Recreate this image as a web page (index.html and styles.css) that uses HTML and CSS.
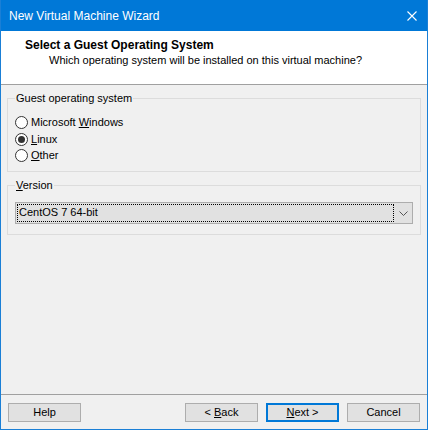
FILE: index.html
```html
<!DOCTYPE html>
<html>
<head>
<meta charset="utf-8">
<link rel="stylesheet" href="styles.css">
</head>
<body>
<div class="window">
  <div class="titlebar">
    <span class="title">New Virtual Machine Wizard</span>
    <svg class="close" width="10" height="10" viewBox="0 0 10 10"><path d="M0.5 0.5 L9.5 9.5 M9.5 0.5 L0.5 9.5" stroke="#fff" stroke-width="1.1" fill="none"/></svg>
  </div>
  <div class="header">
    <div class="h-title">Select a Guest Operating System</div>
    <div class="h-sub">Which operating system will be installed on this virtual machine?</div>
  </div>
  <div class="content">
    <fieldset class="group group-os">
      <legend>Guest operating system</legend>
      <div class="radios">
        <div class="radio"><span class="circle"></span><span>Microsoft <u>W</u>indows</span></div>
        <div class="radio"><span class="circle checked"></span><span><u>L</u>inux</span></div>
        <div class="radio"><span class="circle"></span><span><u>O</u>ther</span></div>
      </div>
    </fieldset>
    <fieldset class="group group-ver">
      <legend><u>V</u>ersion</legend>
      <div class="select">
        <div class="focus">CentOS 7 64-bit</div>
        <div class="arrow"><svg width="9" height="5" viewBox="0 0 9 5"><path d="M0.5 0.5 L4.5 4.5 L8.5 0.5" stroke="#555" stroke-width="1" fill="none"/></svg></div>
      </div>
    </fieldset>
  </div>
  <div class="footer">
    <div class="btn"><span>Help</span></div>
    <div class="spacer"></div>
    <div class="btn"><span>&lt; <u>B</u>ack</span></div>
    <div class="btn primary"><span><u>N</u>ext &gt;</span></div>
    <div class="btn"><span>Cancel</span></div>
  </div>
</div>
</body>
</html>
```

FILE: styles.css
```css
html, body {
  margin: 0;
  padding: 0;
}
body {
  width: 428px;
  height: 430px;
  font-family: "Liberation Sans", Arial, sans-serif;
  font-size: 11px;
  color: #000;
}
.window {
  width: 428px;
  height: 430px;
  box-sizing: border-box;
  border: 1px solid #1a7fd6;
  border-top: 0;
  background: #f0f0f0;
  display: flex;
  flex-direction: column;
}
.titlebar {
  height: 31px;
  flex: 0 0 31px;
  background: #0078d7;
  color: #fff;
  display: flex;
  align-items: center;
  justify-content: space-between;
  padding-left: 8px;
}
.title {
  font-size: 12px;
  line-height: 14px;
}
.close {
  display: block;
  margin-right: 10px;
}
.header {
  flex: 0 0 auto;
  background: #fff;
  border-bottom: 1px solid #a0a0a0;
  padding-top: 7px;
  box-sizing: border-box;
  height: 54px;
}
.h-title {
  font-weight: bold;
  font-size: 12px;
  line-height: 14px;
  padding-left: 24px;
}
.h-sub {
  font-size: 11px;
  line-height: 13px;
  padding-left: 48px;
  margin-top: 2px;
}
.content {
  flex: 1;
  padding: 0 6px;
}
.group {
  margin: 0;
  min-width: 0;
  border: 1px solid #dcdcdc;
  padding: 0 7px;
}
.group legend {
  padding: 0 1px;
  line-height: 13px;
  font-size: 11px;
}
.group-os {
  margin-top: 7px;
  padding-top: 9px;
  padding-bottom: 8px;
}
.group-ver {
  margin-top: 7px;
  padding-top: 10px;
  padding-bottom: 10px;
}
.radios {
  display: flex;
  flex-direction: column;
}
.radio {
  height: 16px;
  display: flex;
  align-items: center;
  gap: 3px;
  line-height: 13px;
}
.radio:first-child {
  margin-bottom: 1px;
}
.circle {
  width: 13px;
  height: 13px;
  box-sizing: border-box;
  border: 1px solid #333;
  border-radius: 50%;
  background: #fff;
  display: flex;
  align-items: center;
  justify-content: center;
}
.circle.checked::after {
  content: "";
  width: 7px;
  height: 7px;
  border-radius: 50%;
  background: #333;
}
.select {
  height: 22px;
  box-sizing: border-box;
  border: 1px solid #adadad;
  background: #e1e1e1;
  display: flex;
}
.focus {
  flex: 1;
  margin: 1px 0 1px 1px;
  border: 1px dotted #000;
  padding-left: 1px;
  line-height: 15px;
}
.arrow {
  width: 18px;
  display: flex;
  align-items: center;
  justify-content: center;
}
.arrow svg {
  display: block;
}
.footer {
  flex: 0 0 auto;
  border-top: 1px solid #a0a0a0;
  padding: 8px 7px 7px 7px;
  display: flex;
  gap: 8px;
}
.spacer {
  flex: 1;
}
.btn {
  width: 73px;
  height: 19px;
  box-sizing: border-box;
  border: 1px solid #adadad;
  background: #e1e1e1;
  display: flex;
  align-items: center;
  justify-content: center;
  line-height: 13px;
}
.btn.primary {
  border: 2px solid #0078d7;
}
```
